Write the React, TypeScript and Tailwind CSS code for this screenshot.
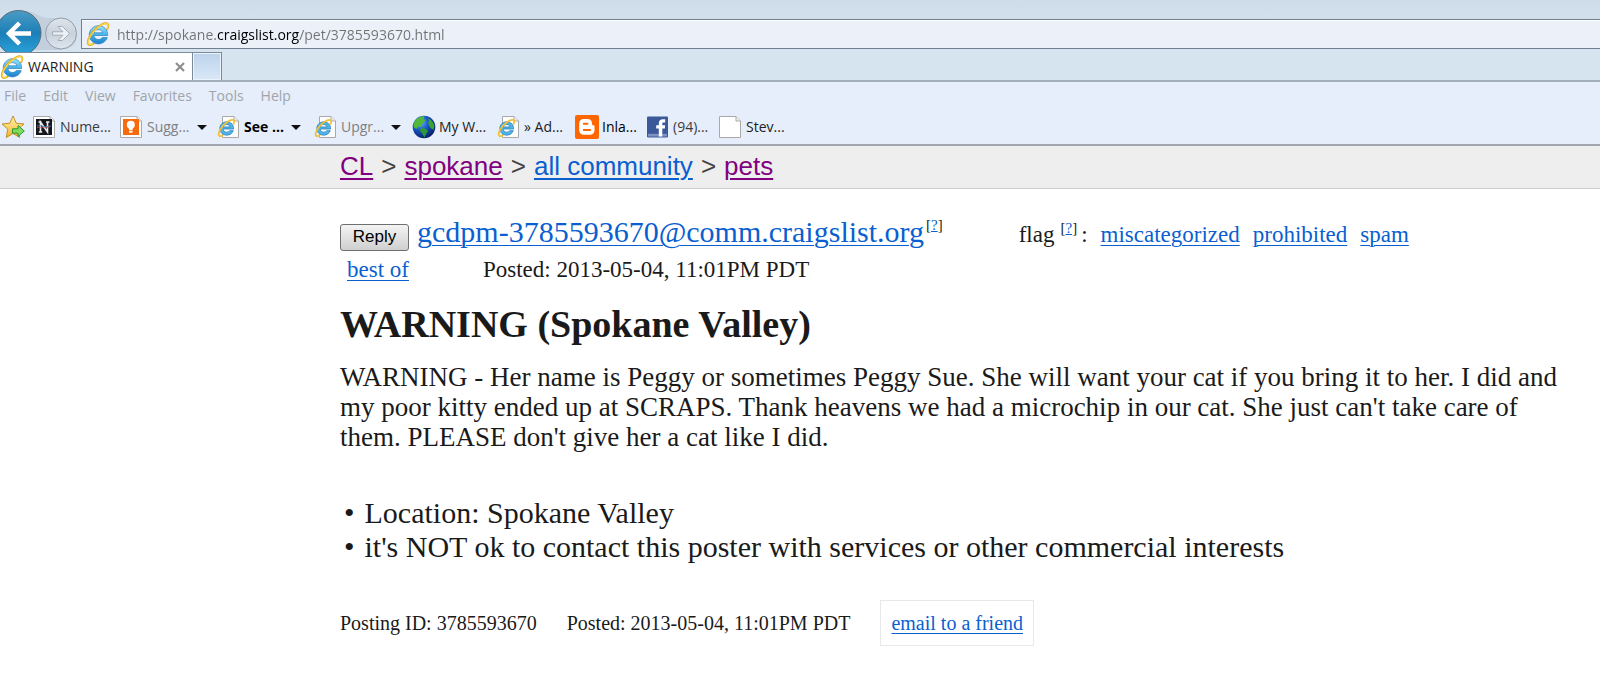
import type { ReactNode } from "react";

const EMAIL = "gcdpm-3785593670@comm.craigslist.org";

function IeLogo({ className }: { className: string }) {
  return (
    <svg viewBox="0 0 24 24" className={className} aria-hidden="true">
      <defs>
        <linearGradient id="ie-blue" x1="0" y1="0" x2="0" y2="1">
          <stop offset="0" stopColor="#9fe2fa" />
          <stop offset="0.5" stopColor="#45b4ea" />
          <stop offset="1" stopColor="#1c7fca" />
        </linearGradient>
      </defs>
      <path
        d="M12.5 3.7C7.6 3.7 3.200 7.700 3.200 12.800s4.200 9.100 9.300 9.100c4 0 7.500-2.600 8.800-6.300h-5.100c-.8 1.200-2.100 1.900-3.700 1.900-2.500 0-4.500-1.700-4.600-4h13.700c.4-5.600-3.600-9.800-9.100-9.800zM8 10.800c.4-1.900 2.200-3.200 4.400-3.200s4 1.300 4.400 3.200z"
        fill="url(#ie-blue)"
        stroke="#2b7fbd"
        strokeWidth="0.7"
      />
      <path
        d="M21.300 7.200c1.200-2.600 1.300-4.600.2-5.400-2.300-1.700-8.700 1.600-13.800 7.200S.6 20.600 2.600 22.400c1 .9 2.900.5 5-.7"
        fill="none"
        stroke="#e3a81a"
        strokeWidth="2"
        strokeLinecap="round"
      />
      <path
        d="M21.300 6.400c.9-2.200 1-3.700.2-4.300-2.300-1.500-8.500 1.700-13.500 7.200S1 20.500 2.900 22.100c.9.700 2.300.5 3.900-.3"
        fill="none"
        stroke="#fbd84c"
        strokeWidth="1.200"
        strokeLinecap="round"
      />
    </svg>
  );
}

function Sheet({ children }: { children?: ReactNode }) {
  return (
    <svg viewBox="0 0 24 24" className="size-6 shrink-0" aria-hidden="true">
      <path d="M0.500 1.500h16.500l4.500 4.500v16.500h-21z" fill="#fff" stroke="#a9a9a9" />
      <path d="M17 1.500v4.500h4.500" fill="#eee" stroke="#a9a9a9" />
      {children}
    </svg>
  );
}

function NIcon() {
  return (
    <Sheet>
      <rect x="3" y="4" width="16" height="16" fill="#15161a" />
      <path d="M7.500 17v-10l7 10v-10M5.500 7h3M13 7h3.500M5.800 17h3.400" fill="none" stroke="#eceff2" strokeWidth="1.600" />
      <path d="M4 11c4-1.500 6 2 14 0" fill="none" stroke="#4c7fc4" strokeWidth="0.900" />
      <path d="M4 12.700c4-1.500 7 1.600 13-1" fill="none" stroke="#c85a4e" strokeWidth="0.700" />
    </Sheet>
  );
}

function BulbIcon() {
  return (
    <Sheet>
      <rect x="3" y="4" width="16" height="16" fill="#f96a0c" />
      <circle cx="10.800" cy="9.800" r="4" fill="#fff" />
      <path d="M8.600 12h4.400l-.6 3.300h-3.200zM9.100 16h3.400v1.800h-3.400z" fill="#fff" />
    </Sheet>
  );
}

function IePage() {
  return (
    <svg viewBox="0 0 24 24" className="size-6 shrink-0" aria-hidden="true">
      <path d="M5.500 1.500h11.500l4.500 4.500v16.500h-16z" fill="#fdfdfd" stroke="#a9a9a9" />
      <path d="M17 1.500v4.500h4.500" fill="#eee" stroke="#a9a9a9" />
      <g transform="translate(0 3.500) scale(0.780)">
        <path
          d="M12.500 4.200C7.600 4.200 3.600 8 3.600 12.800s4 8.600 8.900 8.600c3.900 0 7.200-2.400 8.400-5.800h-4.700c-.8 1.200-2.100 1.900-3.700 1.900-2.500 0-4.500-1.700-4.600-4h13.300c.4-5.300-3.300-9.300-8.700-9.300zM8 10.800c.4-1.900 2.200-3.200 4.400-3.200s4 1.300 4.400 3.200z"
          fill="#4fb4e8"
          stroke="#2b7fbd"
        />
        <path
          d="M21.300 6.800c1-2.400 1-4 .2-4.700-2.300-1.600-8.600 1.600-13.600 7.100S.8 20.500 2.800 22.200c1 .8 2.600.5 4.400-.4"
          fill="none"
          stroke="#f0bf33"
          strokeWidth="2.200"
          strokeLinecap="round"
        />
      </g>
    </svg>
  );
}

function StarIcon() {
  return (
    <svg viewBox="0 0 24 24" className="size-6 shrink-0" aria-hidden="true">
      <defs>
        <linearGradient id="star-gold" x1="0" y1="0" x2="0" y2="1">
          <stop offset="0" stopColor="#fff3b0" />
          <stop offset="1" stopColor="#f3b52c" />
        </linearGradient>
      </defs>
      <path
        d="M12 1l3.200 7.200 7.800.8-5.800 5.200 1.600 8.300-6.800-4-6.800 4 1.600-8.300L1 9l7.800-.8z"
        fill="url(#star-gold)"
        stroke="#c58e22"
        strokeLinejoin="round"
      />
      <path d="M11.500 13.800h5.500v-3.300l6.300 5.500-6.300 5.500v-3.300h-5.500z" fill="#7fdc5c" stroke="#2f9431" strokeLinejoin="round" />
    </svg>
  );
}

function GlobeIcon() {
  return (
    <svg viewBox="0 0 24 24" className="size-6 shrink-0" aria-hidden="true">
      <defs>
        <radialGradient id="globe-sea" cx="0.350" cy="0.300" r="0.750">
          <stop offset="0" stopColor="#6cb6ff" />
          <stop offset="0.450" stopColor="#1658c8" />
          <stop offset="1" stopColor="#061c62" />
        </radialGradient>
      </defs>
      <circle cx="12" cy="12" r="11.300" fill="url(#globe-sea)" />
      <path d="M2.500 6.500C5 2.500 9 .9 12.500 1.200l-1 3 2 1.300-3 3-1.500 3.500-3-.5-1.500 2.500L2 12.500c-.6-2-.4-4 .5-6z" fill="#52b83a" />
      <path d="M9 13l4.500.5 2.500 2.500-2 3-1.500 3.500-2-3.500-2.500-3.500z" fill="#2f9a35" />
      <path d="M16 3l4 3 2.500 4.500-1 4.500-3-2-2.500-5 1-2z" fill="#3ea336" />
    </svg>
  );
}

function BloggerIcon() {
  return (
    <svg viewBox="0 0 24 24" className="size-6 shrink-0" aria-hidden="true">
      <rect width="24" height="24" rx="2" fill="#ff6600" />
      <path
        d="M8.500 4h4.300c2.500 0 4.200 1.800 4.200 4v1c0 .8.400 1.200 1.100 1.200.9 0 1.400.5 1.400 1.300v3.800c0 2.600-1.900 4.500-4.500 4.500H8.700C6.100 19.800 4.200 17.900 4.200 15.300V8.300C4.200 5.800 6 4 8.500 4z"
        fill="#fff"
      />
      <path d="M8.800 8.800h3.700M8.800 15h6.300" stroke="#ff6600" strokeWidth="2" strokeLinecap="round" />
    </svg>
  );
}

function FacebookIcon() {
  return (
    <svg viewBox="0 0 24 24" className="size-6 shrink-0" aria-hidden="true">
      <rect x="1" y="1.500" width="21" height="21" rx="1" fill="#3b5998" />
      <path d="M2 18.800h19v2.700h-19z" fill="#7d93c4" />
      <path d="M12.800 21.500v-8h-2.600v-3.200h2.600V8.200c0-2.700 1.600-4 4-4h2.400v3.200h-1.600c-1 0-1.300.4-1.300 1.300v1.600h2.900l-.4 3.200h-2.500v8z" fill="#fff" />
    </svg>
  );
}

type Favorite = { label: string; icon: ReactNode; box: string; text: string; menu?: boolean };

const favorites: Favorite[] = [
  { label: "Nume...", icon: <NIcon />, box: "w-[87px]", text: "text-[#3c3c3c]" },
  { label: "Sugg...", icon: <BulbIcon />, box: "w-[97px]", text: "text-[#808080]", menu: true },
  { label: "See ...", icon: <IePage />, box: "w-[97px]", text: "text-black font-bold", menu: true },
  { label: "Upgr...", icon: <IePage />, box: "w-[98px]", text: "text-[#808080]", menu: true },
  { label: "My W...", icon: <GlobeIcon />, box: "w-[85px]", text: "text-[#222]" },
  { label: "» Ad...", icon: <IePage />, box: "w-[78px]", text: "text-[#222]" },
  { label: "Inla...", icon: <BloggerIcon />, box: "w-[71px]", text: "text-black" },
  { label: "(94)...", icon: <FacebookIcon />, box: "w-[73px]", text: "text-[#3c3c3c]" },
  { label: "Stev...", icon: <Sheet />, box: "w-[73px]", text: "text-[#222]" },
];

function AddressBar() {
  return (
    <div className="flex h-[49px] items-end bg-linear-to-b from-[#cfdce9] to-[#d6e4f0]">
      <div className="flex h-10 w-[81px] shrink-0 items-start">
        <svg viewBox="0 0 81 43" className="h-[43px] w-[81px] shrink-0" aria-hidden="true">
          <defs>
            <linearGradient id="back-blue" x1="0" y1="0" x2="0" y2="1">
              <stop offset="0" stopColor="#4c9cc4" />
              <stop offset="0.500" stopColor="#1b7fb8" />
              <stop offset="1" stopColor="#2ba5dc" />
            </linearGradient>
            <linearGradient id="fwd-gray" x1="0" y1="0" x2="0" y2="1">
              <stop offset="0" stopColor="#dfe5ec" />
              <stop offset="0.500" stopColor="#c9d1db" />
              <stop offset="1" stopColor="#dde5ee" />
            </linearGradient>
          </defs>
          <path d="M24 2c12 0 14 7 26 7 16 0 27 5 27 16s-7 16-20 16H30z" fill="#c3cfdc" />
          <circle cx="18.500" cy="24" r="22.500" fill="url(#back-blue)" stroke="#54697e" />
          <path d="M31 24.500H10M19.500 14L9 24.500 19.500 35" fill="none" stroke="#fff" strokeWidth="4.500" />
          <circle cx="61" cy="24.500" r="15.500" fill="url(#fwd-gray)" stroke="#929dab" />
          <path d="M52.500 22.800h10.500l-5-5.300h4.500l7 7-7 7H58l5-5.300h-10.500z" fill="#edf1f6" stroke="#a2acb9" />
        </svg>
      </div>
      <div className="flex h-[30px] flex-1 items-center gap-[7px] border border-r-0 border-[#737f90] bg-[#ebf0f9] pl-1 shadow-[inset_0_1px_0_#fff]">
        <IeLogo className="size-6 shrink-0" />
        <input
          type="text"
          aria-label="Address"
          defaultValue="http://spokane.craigslist.org/pet/3785593670.html"
          className="h-6 flex-1 bg-[linear-gradient(90deg,#727272_100px,#000_100px,#000_182px,#727272_182px)] bg-clip-text text-sm text-transparent outline-none"
        />
      </div>
    </div>
  );
}

function BrowserChrome() {
  return (
    <header className="font-['Open_Sans','Noto_Sans',sans-serif]">
      <AddressBar />
      <div className="flex h-[33px] items-end border-b-2 border-[#a3b0bc] bg-[#d6e4f0]">
        <div className="flex h-7 w-[193px] items-center border-t border-r border-[#7c8a99] bg-white">
          <IeLogo className="size-6 shrink-0" />
          <span className="ml-1 flex-1 text-sm text-[#1c1c1c]">WARNING</span>
          <button type="button" aria-label="Close tab" className="mr-[5px] flex p-0.5">
            <svg viewBox="0 0 10 10" className="size-[10px]" aria-hidden="true">
              <path d="M1 1l8 8M9 1L1 9" stroke="#8e8e8e" strokeWidth="2.200" />
            </svg>
          </button>
        </div>
        <button
          type="button"
          aria-label="New tab"
          className="h-7 w-[29px] border-t border-r border-[#7c8a99] bg-linear-to-b from-[#bcd3ec] to-[#dae8f7] shadow-[inset_0_0_0_1px_#eaf2fb]"
        />
      </div>
      <div className="h-16 border-b-2 border-[#a2a5ae] bg-[#e6eefb]">
        <nav className="flex h-7 items-center gap-[17px] pl-1 text-sm text-[#a0a4ab]">
          {["File", "Edit", "View", "Favorites", "Tools", "Help"].map((item) => (
            <button key={item} type="button">
              {item}
            </button>
          ))}
        </nav>
        <div className="flex h-[34px] items-center pl-px">
          <button type="button" aria-label="Add to favorites bar" className="w-8">
            <StarIcon />
          </button>
          {favorites.map((f) => (
            <button key={f.label} type="button" className={`flex shrink-0 items-center gap-[3px] text-sm whitespace-nowrap ${f.box} ${f.text}`}>
              {f.icon}
              <span>{f.label}</span>
              {f.menu && (
                <svg viewBox="0 0 10 5" className="ml-1 h-[5px] w-[10px] shrink-0" aria-hidden="true">
                  <path d="M0 0h10L5 5z" fill="#111" />
                </svg>
              )}
            </button>
          ))}
        </div>
      </div>
    </header>
  );
}

function Help() {
  return (
    <span className="text-[15px] leading-4 text-[#222]">
      [
      <a href="#help" className="text-[#0a5fd0] underline">
        ?
      </a>
      ]
    </span>
  );
}

const link = "text-[#0a5fd0] underline decoration-1 underline-offset-3";
const crumb = "underline decoration-2 underline-offset-3";

export default function App() {
  return (
    <div className="min-h-screen bg-white font-['Liberation_Serif',serif] text-[#1a1a1a]">
      <BrowserChrome />
      <nav className="flex h-[43px] items-center gap-2 border-b border-[#cccccc] bg-[#eeeeee] pb-0.5 pl-[340px] font-['Liberation_Sans',sans-serif] text-[26px] text-[#444]">
        <a href="#cl" className={`${crumb} text-[#800080]`}>
          CL
        </a>
        <span>&gt;</span>
        <a href="#spokane" className={`${crumb} text-[#800080]`}>
          spokane
        </a>
        <span>&gt;</span>
        <a href="#community" className={`${crumb} text-[#0a5fd0]`}>
          all community
        </a>
        <span>&gt;</span>
        <a href="#pets" className={`${crumb} text-[#800080]`}>
          pets
        </a>
      </nav>

      <main className="pr-10 pl-[340px]">
        <div className="flex items-baseline pt-[25px] text-[23px] leading-9">
          <button
            type="button"
            className="h-[27px] w-[69px] rounded-[3px] border border-[#6f6f6f] bg-linear-to-b from-[#f4f4f4] to-[#cfcfcf] font-['Liberation_Sans',sans-serif] text-[17px] leading-6 text-black"
          >
            Reply
          </button>
          <a href={`mailto:${EMAIL}`} className={`${link} ml-2 text-[30px]`}>
            {EMAIL}
          </a>
          <span className="ml-0.5 flex self-stretch pt-[3px]">
            <Help />
          </span>
          <span className="ml-[76px]">flag</span>
          <span className="ml-1.5 flex self-stretch pt-1.5">
            <Help />
          </span>
          <span className="ml-1">:</span>
          <span className="ml-[13px] flex gap-[13px]">
            <a href="#miscategorized" className={link}>
              miscategorized
            </a>
            <a href="#prohibited" className={link}>
              prohibited
            </a>
            <a href="#spam" className={link}>
              spam
            </a>
          </span>
        </div>
        <div className="flex items-baseline gap-[74px] pl-[7px] text-[23px] leading-[34px]">
          <a href="#best" className={link}>
            best of
          </a>
          <span>Posted: 2013-05-04, 11:01PM PDT</span>
        </div>

        <h1 className="mt-[15px] text-[38px] leading-[44px] font-bold">WARNING (Spokane Valley)</h1>
        <p className="mt-4 text-[27px] leading-[30px]">
          WARNING - Her name is Peggy or sometimes Peggy Sue. She will want your cat if you bring it to her. I did and my
          poor kitty ended up at SCRAPS. Thank heavens we had a microchip in our cat. She just can't take care of them.
          PLEASE don't give her a cat like I did.
        </p>

        <ul className="mt-11 pl-1 text-[30px] leading-[34px]">
          <li className="flex gap-2.5">
            <span aria-hidden="true">•</span>Location: Spokane Valley
          </li>
          <li className="flex gap-2.5">
            <span aria-hidden="true">•</span>it's NOT ok to contact this poster with services or other commercial interests
          </li>
        </ul>

        <footer className="mt-9 flex items-center gap-[30px] text-xl">
          <span>Posting ID: 3785593670</span>
          <span>Posted: 2013-05-04, 11:01PM PDT</span>
          <span className="flex h-[46px] items-center border border-[#e8e8e8] px-2.5">
            <a href="#email" className={link}>
              email to a friend
            </a>
          </span>
        </footer>
      </main>
    </div>
  );
}
